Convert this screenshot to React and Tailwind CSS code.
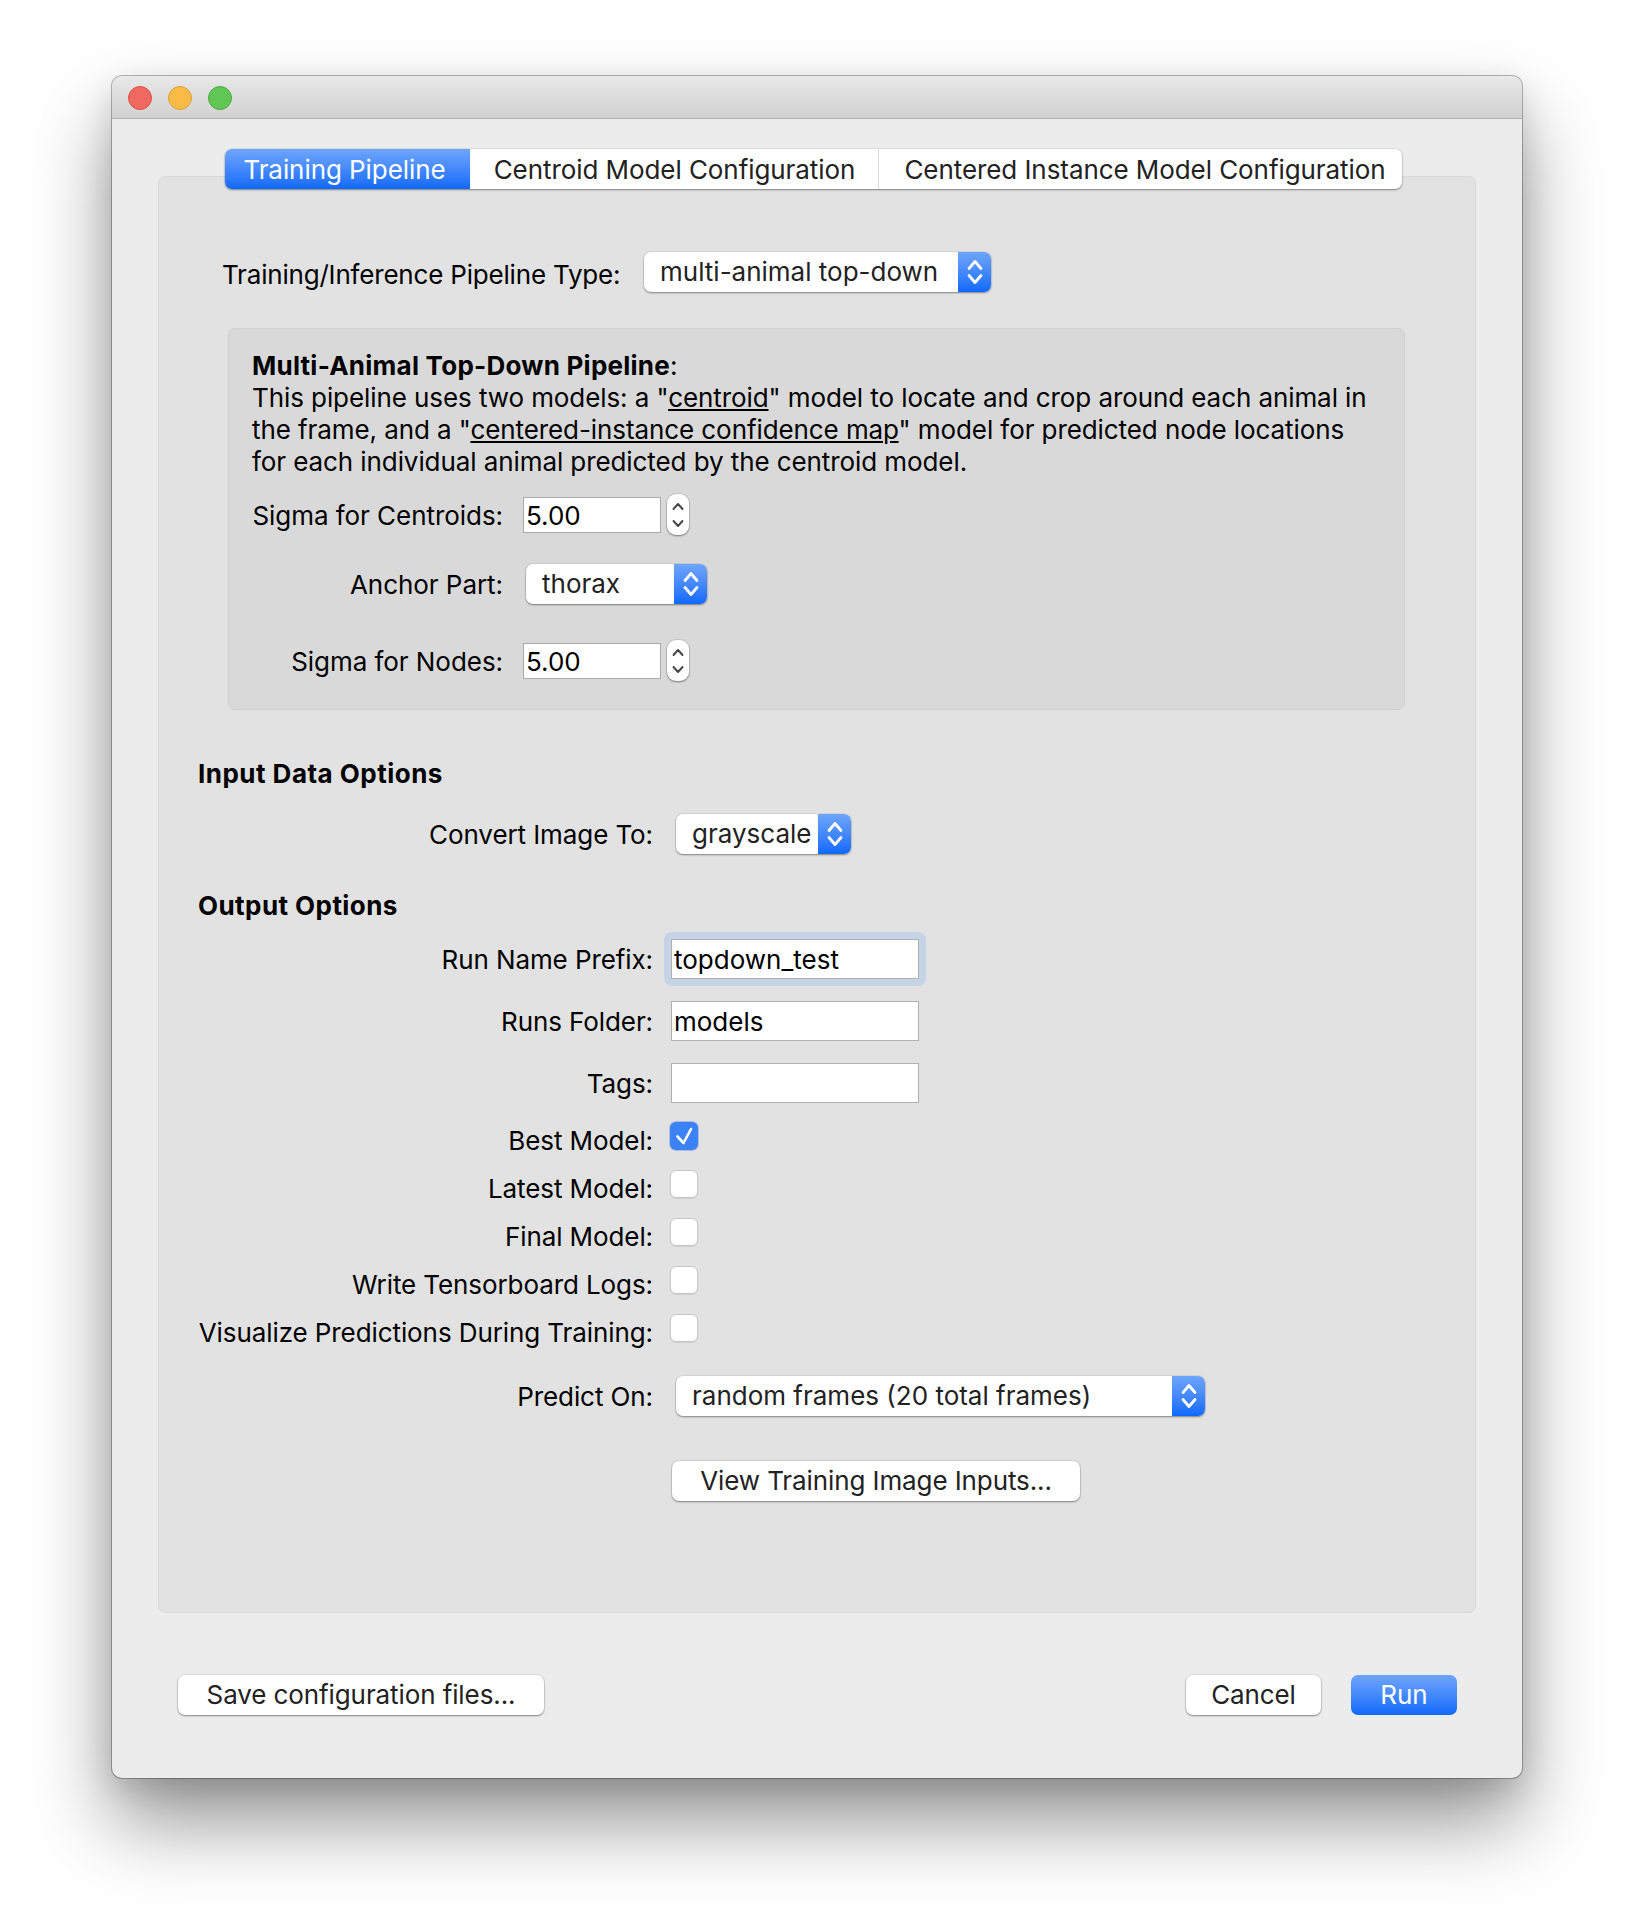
const FONT = "font-['Inter','Liberation_Sans',sans-serif]";

function Updown() {
  return (
    <svg viewBox="0 0 18 30" className="h-[30px] w-[18px]" fill="none" stroke="currentColor" strokeWidth="2.8" strokeLinecap="round" strokeLinejoin="round">
      <path d="M3 11.5 L9 4.5 L15 11.5" />
      <path d="M3 18.5 L9 25.5 L15 18.5" />
    </svg>
  );
}

function SmallUpdown() {
  return (
    <svg viewBox="0 0 12 28" className="h-[28px] w-[12px]" fill="none" stroke="currentColor" strokeWidth="1.9" strokeLinecap="round" strokeLinejoin="round">
      <path d="M1.5 8 L6 3 L10.5 8" />
      <path d="M1.5 20 L6 25 L10.5 20" />
    </svg>
  );
}

function Select({ width, children }) {
  return (
    <div className={`flex h-[40px] ${width} rounded-[7px] bg-white text-[#222] shadow-[0_1px_2px_rgba(0,0,0,0.4),0_0_0_1px_rgba(0,0,0,0.05)] overflow-hidden`}>
      <div className="flex-1 pl-[16px] leading-[40px] whitespace-nowrap">{children}</div>
      <div className="flex w-[33px] items-center justify-center bg-gradient-to-b from-[#6ea5fb] to-[#0c69fb] text-white">
        <Updown />
      </div>
    </div>
  );
}

function Spin({ value }) {
  return (
    <div className="flex items-center">
      <div className="flex h-[36px] w-[138px] items-center border-[1.5px] border-[#a9a9a9] bg-white pl-[2px] pt-[2px] text-black">{value}</div>
      <div className="ml-[6px] flex h-[41px] w-[22px] items-center justify-center rounded-[9px] bg-white text-[#444] shadow-[0_1px_2px_rgba(0,0,0,0.4),0_0_0_1px_rgba(0,0,0,0.08)]">
        <SmallUpdown />
      </div>
    </div>
  );
}

function TextField({ value }) {
  return (
    <div className="flex h-[40px] w-[248px] items-center border-[1.5px] border-[#b0b0b0] bg-white pl-[2px] pt-[2px] text-black">{value}</div>
  );
}

function Field({ label, children, gap = "ml-[18px]", className = "" }) {
  return (
    <div className={`flex items-center ${className}`}>
      <div className="w-[455px] whitespace-nowrap pt-[2px] text-right tracking-[-0.09px] text-black">{label}</div>
      <div className={gap}>{children}</div>
    </div>
  );
}

function Check({ label, checked, className = "" }) {
  return (
    <div className={`flex h-[28px] items-center ${className}`}>
      <div className="w-[455px] translate-y-[5px] whitespace-nowrap text-right tracking-[-0.09px] text-black">{label}</div>
      {checked ? (
        <div className="ml-[17px] h-[28px] w-[28px] rounded-[6px] bg-[#3b82f6] shadow-[0_0_0_1px_rgba(40,100,220,0.3)]">
          <svg viewBox="0 0 28 28" className="h-[28px] w-[28px]" fill="none" stroke="#fff" strokeWidth="2.6" strokeLinecap="round" strokeLinejoin="round">
            <path d="M7.5 14.5 L13.5 21 L21 7" />
          </svg>
        </div>
      ) : (
        <div className="ml-[17px] h-[28px] w-[28px] rounded-[6px] border border-[#c6c6c6] bg-white shadow-[0_1px_1px_rgba(0,0,0,0.08)]" />
      )}
    </div>
  );
}

function Button({ className = "", children }) {
  return (
    <div className={`flex h-[40px] items-center justify-center rounded-[7px] bg-white text-[#222] shadow-[0_1px_2px_rgba(0,0,0,0.4),0_0_0_1px_rgba(0,0,0,0.06)] ${className}`}>
      {children}
    </div>
  );
}

function BoxLabel({ children }) {
  return <div className="w-[251px] whitespace-nowrap pt-[2px] text-right tracking-[-0.05px]">{children}</div>;
}

export default function App() {
  return (
    <div className={`${FONT} h-[1926px] w-[1634px] overflow-hidden bg-white pl-[112px] pt-[76px] text-[26px] leading-[32px]`}>
      <div className="h-[1702px] w-[1410px] rounded-[10px] bg-[#ececec] shadow-[0_0_0_1px_rgba(0,0,0,0.28),0_44px_80px_rgba(0,0,0,0.42),0_10px_30px_rgba(0,0,0,0.12)]">
        {/* title bar */}
        <div className="flex h-[43px] items-center gap-[16px] rounded-t-[10px] border-b border-[#b2b2b2] bg-gradient-to-b from-[#e9e9e9] to-[#d1d1d1] pl-[16px] pt-[2px]">
          <div className="h-[24px] w-[24px] rounded-full border border-[#d9534a] bg-[#f0685f]" />
          <div className="h-[24px] w-[24px] rounded-full border border-[#d9a238] bg-[#f7bb46]" />
          <div className="h-[24px] w-[24px] rounded-full border border-[#4ea648] bg-[#60c654]" />
        </div>

        {/* tabs */}
        <div className="relative z-10 ml-[113px] mt-[30px] flex h-[40px] w-[1177px] rounded-[7px] bg-white tracking-[-0.07px] text-[#222] shadow-[0_1px_2px_rgba(0,0,0,0.4),0_0_0_1px_rgba(0,0,0,0.05)]">
          <div className="flex w-[245px] items-center justify-center rounded-l-[7px] bg-gradient-to-b from-[#6ea5fb] to-[#0c69fb] pr-[6px] pt-[2px] text-white">Training Pipeline</div>
          <div className="flex w-[409px] items-center justify-center border-r border-[#dcdcdc] pl-[1px] pt-[2px]">Centroid Model Configuration</div>
          <div className="flex flex-1 items-center justify-center pl-[9px] pt-[2px]">Centered Instance Model Configuration</div>
        </div>

        {/* main panel */}
        <div className="ml-[46px] mt-[-13px] h-[1437px] w-[1318px] rounded-[7px] border border-[#dadada] bg-[#e2e2e2] pt-[75px]">
          <div className="ml-[63px] flex items-center">
            <div className="w-[398px] whitespace-nowrap pt-[5px] tracking-[-0.19px] text-black">Training/Inference Pipeline Type:</div>
            <div className="ml-[24px]"><Select width="w-[347px]">multi-animal top-down</Select></div>
          </div>

          <div className="ml-[69px] mt-[36px] h-[382px] w-[1177px] rounded-[7px] border border-[#d0d0d0] bg-[#d9d9d9] pl-[23px] pt-[21px] text-black">
            <div className="whitespace-nowrap"><span className="font-bold tracking-[0.25px]">Multi-Animal Top-Down Pipeline</span>:</div>
            <div className="whitespace-nowrap tracking-[-0.085px]">This pipeline uses two models: a "<span className="underline">centroid</span>" model to locate and crop around each animal in</div>
            <div className="whitespace-nowrap tracking-[-0.085px]">the frame, and a "<span className="underline">centered-instance confidence map</span>" model for predicted node locations</div>
            <div className="whitespace-nowrap tracking-[-0.085px]">for each individual animal predicted by the centroid model.</div>

            <div className="mt-[16px] flex h-[41px] items-center">
              <BoxLabel>Sigma for Centroids:</BoxLabel>
              <div className="ml-[20px]"><Spin value="5.00" /></div>
            </div>
            <div className="mt-[29px] flex h-[40px] items-center">
              <BoxLabel>Anchor Part:</BoxLabel>
              <div className="ml-[23px]"><Select width="w-[181px]">thorax</Select></div>
            </div>
            <div className="mt-[36px] flex h-[41px] items-center">
              <BoxLabel>Sigma for Nodes:</BoxLabel>
              <div className="ml-[20px]"><Spin value="5.00" /></div>
            </div>
          </div>

          <div className="ml-[39px]">
            <div className="mt-[48px] font-bold tracking-[0.48px] text-black">Input Data Options</div>
            <Field label="Convert Image To:" gap="ml-[23px]" className="mt-[24px]"><Select width="w-[175px]">grayscale</Select></Field>

            <div className="mt-[36px] font-bold tracking-[0.44px] text-black">Output Options</div>
            <Field label="Run Name Prefix:" className="mt-[17px]">
              <div className="-m-[7px] rounded-[8px] bg-[#c5d3e7] p-[7px]"><TextField value="topdown_test" /></div>
            </Field>
            <Field label="Runs Folder:" className="mt-[22px]"><TextField value="models" /></Field>
            <Field label="Tags:" className="mt-[22px]"><TextField value="" /></Field>

            <Check label="Best Model:" checked className="mt-[19px]" />
            <Check label="Latest Model:" className="mt-[20px]" />
            <Check label="Final Model:" className="mt-[20px]" />
            <Check label="Write Tensorboard Logs:" className="mt-[20px]" />
            <Check label="Visualize Predictions During Training:" className="mt-[20px]" />

            <Field label="Predict On:" gap="ml-[23px]" className="mt-[34px]"><Select width="w-[529px]">random frames (20 total frames)</Select></Field>

            <Button className="ml-[474px] mt-[45px] w-[408px] tracking-[-0.1px]">View Training Image Inputs...</Button>
          </div>
        </div>

        {/* footer */}
        <div className="mt-[62px] flex items-center justify-between pl-[66px] pr-[65px]">
          <Button className="w-[366px] tracking-[-0.1px]">Save configuration files...</Button>
          <div className="flex items-center gap-[30px]">
            <Button className="w-[135px] tracking-[-0.1px]">Cancel</Button>
            <div className="flex h-[40px] w-[106px] items-center justify-center rounded-[7px] bg-gradient-to-b from-[#6ea5fb] to-[#0c69fb] text-white">Run</div>
          </div>
        </div>
      </div>
    </div>
  );
}
